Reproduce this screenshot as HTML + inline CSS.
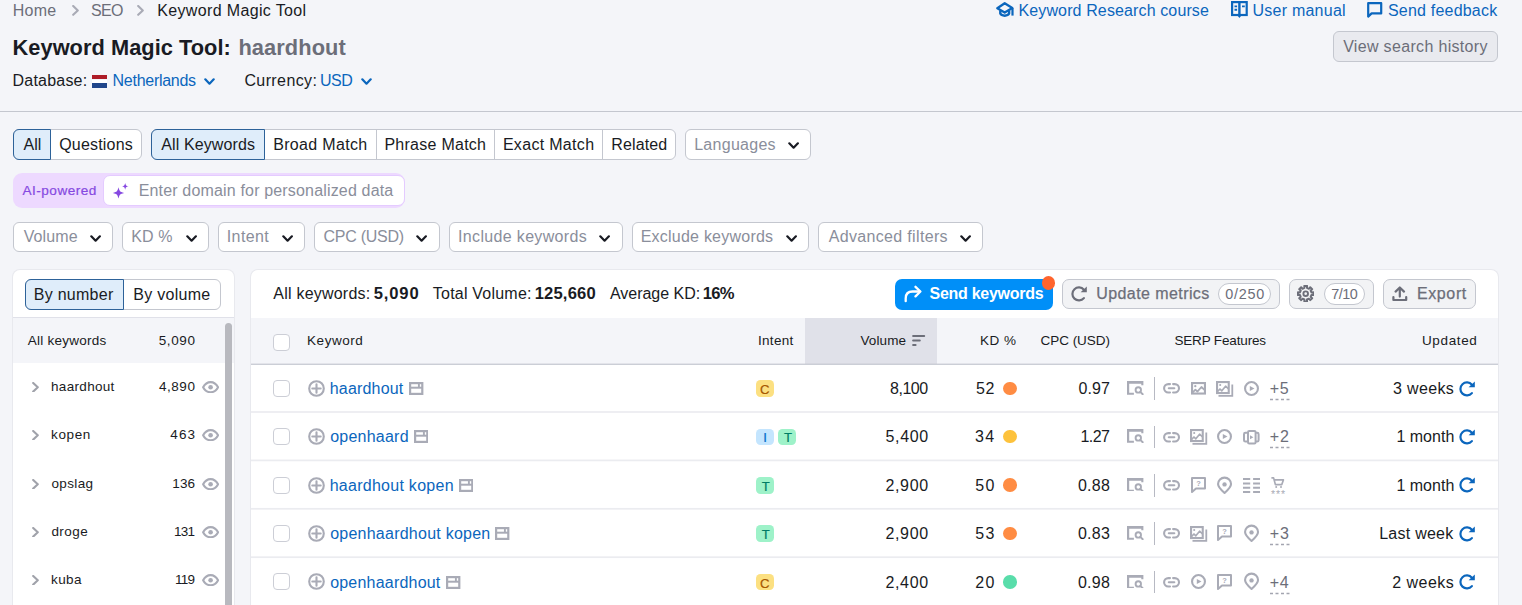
<!DOCTYPE html><html><head><meta charset="utf-8"><title>Keyword Magic Tool</title><style>
html,body{margin:0;padding:0}body{width:1522px;height:605px;overflow:hidden;background:#f4f5f9;position:relative;font-family:"Liberation Sans", Arial, sans-serif;}
.t{position:absolute;white-space:nowrap;line-height:1;}
</style></head><body>
<svg style="position:absolute;left:71.6px;top:5.3px" width="7" height="10.8" viewBox="0 0 7 10.8" ><path d="M1.2 1 L5.8 5.4 L1.2 9.8" fill="none" stroke="#a9abb6" stroke-width="2.1" stroke-linecap="round" stroke-linejoin="round"/></svg>
<svg style="position:absolute;left:137px;top:5.3px" width="7" height="10.8" viewBox="0 0 7 10.8" ><path d="M1.2 1 L5.8 5.4 L1.2 9.8" fill="none" stroke="#a9abb6" stroke-width="2.1" stroke-linecap="round" stroke-linejoin="round"/></svg>
<div style="position:absolute;left:92.2px;top:75.2px;width:15px;height:4.3px;background:#ae1c28"></div>
<div style="position:absolute;left:92.2px;top:79.5px;width:15px;height:3.8px;background:#fff"></div>
<div style="position:absolute;left:92.2px;top:83.3px;width:15px;height:4.5px;background:#21468b"></div>
<svg style="position:absolute;left:203.7px;top:77.8px" width="11" height="7" viewBox="0 0 11 7" ><path d="M1.3 1.3 L5.5 5.7 L9.7 1.3" fill="none" stroke="#0b66bd" stroke-width="2.2" stroke-linecap="round" stroke-linejoin="round"/></svg>
<svg style="position:absolute;left:360.7px;top:77.8px" width="11" height="7" viewBox="0 0 11 7" ><path d="M1.3 1.3 L5.5 5.7 L9.7 1.3" fill="none" stroke="#0b66bd" stroke-width="2.2" stroke-linecap="round" stroke-linejoin="round"/></svg>
<div style="position:absolute;left:0px;top:111px;width:1522px;height:1px;background:#c4c7cf"></div>
<svg style="position:absolute;left:996px;top:2px" width="18" height="15" viewBox="0 0 18 15" ><path d="M8.7 1.2 L1.3 6.2 L8.7 10.6 L16.3 6 Z" fill="none" stroke="#0b66bd" stroke-width="2.3" stroke-linejoin="round"/><path d="M4.3 8.6 V11.6 C5.6 14.4 11.8 14.4 13.1 11.6 V8.6" fill="none" stroke="#0b66bd" stroke-width="2.4" stroke-linejoin="round"/><path d="M16.5 6 V13.6" stroke="#0b66bd" stroke-width="2.2"/></svg>
<svg style="position:absolute;left:1231px;top:1px" width="17" height="18" viewBox="0 0 17 18" ><rect x="1.1" y="1.1" width="14.6" height="12.9" fill="none" stroke="#0b66bd" stroke-width="2.2"/><path d="M8.4 1 V14" stroke="#0b66bd" stroke-width="2.4"/><path d="M6.4 14.6 L8.4 16.9 L10.4 14.6 Z" fill="#0b66bd"/><path d="M3.5 5.4 H6.1 M3.5 8.8 H6.1 M11 5.4 H13.8" stroke="#0b66bd" stroke-width="1.9"/></svg>
<svg style="position:absolute;left:1367px;top:2px" width="16" height="16" viewBox="0 0 16 16" ><path d="M1.2 1.2 H14.2 V11.4 H4.6 L1.2 14.6 Z" fill="none" stroke="#0b66bd" stroke-width="2.2" stroke-linejoin="round"/></svg>
<div style="position:absolute;left:1333px;top:31px;width:163px;height:29px;border:1px solid #c4c7cf;background:#e9eaef;border-radius:6px"></div>
<div style="position:absolute;left:13px;top:129px;width:127px;height:29px;border:1px solid #c4c7cf;background:#fff;border-radius:6px"></div>
<div style="position:absolute;left:13px;top:129px;width:35.7px;height:29px;border:1px solid #2d6299;background:#dfedfa;border-radius:6px 0 0 6px"></div>
<div style="position:absolute;left:151px;top:129px;width:523px;height:29px;border:1px solid #c4c7cf;background:#fff;border-radius:6px"></div>
<div style="position:absolute;left:375.5px;top:130px;width:1px;height:29px;background:#c4c7cf"></div>
<div style="position:absolute;left:494.3px;top:130px;width:1px;height:29px;background:#c4c7cf"></div>
<div style="position:absolute;left:602.3px;top:130px;width:1px;height:29px;background:#c4c7cf"></div>
<div style="position:absolute;left:151px;top:129px;width:112px;height:29px;border:1px solid #2d6299;background:#dfedfa;border-radius:6px 0 0 6px"></div>
<div style="position:absolute;left:685px;top:129px;width:124px;height:29px;border:1px solid #c4c7cf;background:#fff;border-radius:6px"></div>
<svg style="position:absolute;left:787.5px;top:142.0px" width="11.2" height="7" viewBox="0 0 11.2 7" ><path d="M1.3 1.3 L5.6 5.7 L9.899999999999999 1.3" fill="none" stroke="#191b23" stroke-width="2.2" stroke-linecap="round" stroke-linejoin="round"/></svg>
<div style="position:absolute;left:13px;top:173.3px;width:391.5px;height:35px;background:#edd9ff;border-radius:9px"></div>
<div style="position:absolute;left:103.3px;top:175.4px;width:299.4px;height:28.2px;border:1px solid #e4cbff;background:#fff;border-radius:7px"></div>
<svg style="position:absolute;left:112px;top:182px" width="18" height="18" viewBox="0 0 18 18" ><path d="M6.5 5.300000000000001 C7.732 9.668000000000001 7.732 9.668000000000001 12.1 10.9 C7.732 12.132 7.732 12.132 6.5 16.5 C5.268 12.132 5.268 12.132 0.9000000000000004 10.9 C5.268 9.668000000000001 5.268 9.668000000000001 6.5 5.300000000000001 Z" fill="#8649e1"/><path d="M13.2 0.8999999999999999 C13.947999999999999 3.5519999999999996 13.947999999999999 3.5519999999999996 16.599999999999998 4.3 C13.947999999999999 5.048 13.947999999999999 5.048 13.2 7.699999999999999 C12.452 5.048 12.452 5.048 9.799999999999999 4.3 C12.452 3.5519999999999996 12.452 3.5519999999999996 13.2 0.8999999999999999 Z" fill="#8649e1"/></svg>
<div style="position:absolute;left:13px;top:222px;width:98px;height:28px;border:1px solid #c4c7cf;background:#fff;border-radius:6px"></div>
<svg style="position:absolute;left:89.5px;top:234.5px" width="11.2" height="7" viewBox="0 0 11.2 7" ><path d="M1.3 1.3 L5.6 5.7 L9.899999999999999 1.3" fill="none" stroke="#191b23" stroke-width="2.2" stroke-linecap="round" stroke-linejoin="round"/></svg>
<div style="position:absolute;left:122px;top:222px;width:84.69999999999999px;height:28px;border:1px solid #c4c7cf;background:#fff;border-radius:6px"></div>
<svg style="position:absolute;left:185.5px;top:234.5px" width="11.2" height="7" viewBox="0 0 11.2 7" ><path d="M1.3 1.3 L5.6 5.7 L9.899999999999999 1.3" fill="none" stroke="#191b23" stroke-width="2.2" stroke-linecap="round" stroke-linejoin="round"/></svg>
<div style="position:absolute;left:218px;top:222px;width:84.69999999999999px;height:28px;border:1px solid #c4c7cf;background:#fff;border-radius:6px"></div>
<svg style="position:absolute;left:281.7px;top:234.5px" width="11.2" height="7" viewBox="0 0 11.2 7" ><path d="M1.3 1.3 L5.6 5.7 L9.899999999999999 1.3" fill="none" stroke="#191b23" stroke-width="2.2" stroke-linecap="round" stroke-linejoin="round"/></svg>
<div style="position:absolute;left:314px;top:222px;width:123.5px;height:28px;border:1px solid #c4c7cf;background:#fff;border-radius:6px"></div>
<svg style="position:absolute;left:416.2px;top:234.5px" width="11.2" height="7" viewBox="0 0 11.2 7" ><path d="M1.3 1.3 L5.6 5.7 L9.899999999999999 1.3" fill="none" stroke="#191b23" stroke-width="2.2" stroke-linecap="round" stroke-linejoin="round"/></svg>
<div style="position:absolute;left:449.2px;top:222px;width:171.8px;height:28px;border:1px solid #c4c7cf;background:#fff;border-radius:6px"></div>
<svg style="position:absolute;left:598.7px;top:234.5px" width="11.2" height="7" viewBox="0 0 11.2 7" ><path d="M1.3 1.3 L5.6 5.7 L9.899999999999999 1.3" fill="none" stroke="#191b23" stroke-width="2.2" stroke-linecap="round" stroke-linejoin="round"/></svg>
<div style="position:absolute;left:632px;top:222px;width:174.70000000000005px;height:28px;border:1px solid #c4c7cf;background:#fff;border-radius:6px"></div>
<svg style="position:absolute;left:785.5px;top:234.5px" width="11.2" height="7" viewBox="0 0 11.2 7" ><path d="M1.3 1.3 L5.6 5.7 L9.899999999999999 1.3" fill="none" stroke="#191b23" stroke-width="2.2" stroke-linecap="round" stroke-linejoin="round"/></svg>
<div style="position:absolute;left:818.2px;top:222px;width:162.79999999999995px;height:28px;border:1px solid #c4c7cf;background:#fff;border-radius:6px"></div>
<svg style="position:absolute;left:959.5px;top:234.5px" width="11.2" height="7" viewBox="0 0 11.2 7" ><path d="M1.3 1.3 L5.6 5.7 L9.899999999999999 1.3" fill="none" stroke="#191b23" stroke-width="2.2" stroke-linecap="round" stroke-linejoin="round"/></svg>
<div style="position:absolute;left:13px;top:270px;width:220.5px;height:400px;background:#fff;border-radius:7px;box-shadow:0 0 0 1px #e8e9ee"></div>
<div style="position:absolute;left:25px;top:279px;width:194px;height:29px;border:1px solid #c4c7cf;background:#fff;border-radius:6px"></div>
<div style="position:absolute;left:25px;top:279px;width:96.7px;height:29px;border:1px solid #2d6299;background:#dfedfa;border-radius:6px 0 0 6px"></div>
<div style="position:absolute;left:12.5px;top:317px;width:221px;height:1px;background:#e0e1e9"></div>
<div style="position:absolute;left:12.5px;top:318px;width:221px;height:44.5px;background:#f4f5f9"></div>
<div style="position:absolute;left:224.8px;top:323.3px;width:7.4px;height:300px;background:#b8b9bf;border-radius:4px"></div>
<svg style="position:absolute;left:32.2px;top:381.6px" width="7" height="10.6" viewBox="0 0 7 10.6" ><path d="M1.2 1 L5.8 5.3 L1.2 9.6" fill="none" stroke="#a0a2aa" stroke-width="2.1" stroke-linecap="round" stroke-linejoin="round"/></svg>
<svg style="position:absolute;left:202px;top:381px" width="17.2" height="12.4" viewBox="0 0 17.2 12.4" ><path d="M1.1 6.2 C3.2 2.4 6 1.1 8.6 1.1 C11.2 1.1 14 2.4 16.1 6.2 C14 10 11.2 11.3 8.6 11.3 C6 11.3 3.2 10 1.1 6.2 Z" fill="none" stroke="#a9abb6" stroke-width="2.1" stroke-linejoin="round"/><circle cx="8.6" cy="6.2" r="2.3" fill="#a9abb6"/></svg>
<svg style="position:absolute;left:32.2px;top:429.6px" width="7" height="10.6" viewBox="0 0 7 10.6" ><path d="M1.2 1 L5.8 5.3 L1.2 9.6" fill="none" stroke="#a0a2aa" stroke-width="2.1" stroke-linecap="round" stroke-linejoin="round"/></svg>
<svg style="position:absolute;left:202px;top:429px" width="17.2" height="12.4" viewBox="0 0 17.2 12.4" ><path d="M1.1 6.2 C3.2 2.4 6 1.1 8.6 1.1 C11.2 1.1 14 2.4 16.1 6.2 C14 10 11.2 11.3 8.6 11.3 C6 11.3 3.2 10 1.1 6.2 Z" fill="none" stroke="#a9abb6" stroke-width="2.1" stroke-linejoin="round"/><circle cx="8.6" cy="6.2" r="2.3" fill="#a9abb6"/></svg>
<svg style="position:absolute;left:32.2px;top:478.6px" width="7" height="10.6" viewBox="0 0 7 10.6" ><path d="M1.2 1 L5.8 5.3 L1.2 9.6" fill="none" stroke="#a0a2aa" stroke-width="2.1" stroke-linecap="round" stroke-linejoin="round"/></svg>
<svg style="position:absolute;left:202px;top:478px" width="17.2" height="12.4" viewBox="0 0 17.2 12.4" ><path d="M1.1 6.2 C3.2 2.4 6 1.1 8.6 1.1 C11.2 1.1 14 2.4 16.1 6.2 C14 10 11.2 11.3 8.6 11.3 C6 11.3 3.2 10 1.1 6.2 Z" fill="none" stroke="#a9abb6" stroke-width="2.1" stroke-linejoin="round"/><circle cx="8.6" cy="6.2" r="2.3" fill="#a9abb6"/></svg>
<svg style="position:absolute;left:32.2px;top:526.6px" width="7" height="10.6" viewBox="0 0 7 10.6" ><path d="M1.2 1 L5.8 5.3 L1.2 9.6" fill="none" stroke="#a0a2aa" stroke-width="2.1" stroke-linecap="round" stroke-linejoin="round"/></svg>
<svg style="position:absolute;left:202px;top:526px" width="17.2" height="12.4" viewBox="0 0 17.2 12.4" ><path d="M1.1 6.2 C3.2 2.4 6 1.1 8.6 1.1 C11.2 1.1 14 2.4 16.1 6.2 C14 10 11.2 11.3 8.6 11.3 C6 11.3 3.2 10 1.1 6.2 Z" fill="none" stroke="#a9abb6" stroke-width="2.1" stroke-linejoin="round"/><circle cx="8.6" cy="6.2" r="2.3" fill="#a9abb6"/></svg>
<svg style="position:absolute;left:32.2px;top:574.6px" width="7" height="10.6" viewBox="0 0 7 10.6" ><path d="M1.2 1 L5.8 5.3 L1.2 9.6" fill="none" stroke="#a0a2aa" stroke-width="2.1" stroke-linecap="round" stroke-linejoin="round"/></svg>
<svg style="position:absolute;left:202px;top:574px" width="17.2" height="12.4" viewBox="0 0 17.2 12.4" ><path d="M1.1 6.2 C3.2 2.4 6 1.1 8.6 1.1 C11.2 1.1 14 2.4 16.1 6.2 C14 10 11.2 11.3 8.6 11.3 C6 11.3 3.2 10 1.1 6.2 Z" fill="none" stroke="#a9abb6" stroke-width="2.1" stroke-linejoin="round"/><circle cx="8.6" cy="6.2" r="2.3" fill="#a9abb6"/></svg>
<div style="position:absolute;left:251px;top:270px;width:1247px;height:400px;background:#fff;border-radius:7px;box-shadow:0 0 0 1px #e8e9ee"></div>
<div style="position:absolute;left:895px;top:279.2px;width:158px;height:30.6px;background:#008ff8;border-radius:7px"></div>
<svg style="position:absolute;left:903.5px;top:285px" width="18" height="18" viewBox="0 0 18 18" ><path d="M1.7 16.2 V13.4 Q1.7 6.5 8.6 6.5 H15.6" fill="none" stroke="#fff" stroke-width="2.3" stroke-linecap="round"/><path d="M11.5 1.8 L16.4 6.5 L11.5 11.4" fill="none" stroke="#fff" stroke-width="2.3" stroke-linecap="round" stroke-linejoin="round"/></svg>
<div style="position:absolute;left:1042.2px;top:276.3px;width:13px;height:13.4px;background:#ff642d;border-radius:50%"></div>
<div style="position:absolute;left:1062.3px;top:279.2px;width:215.4px;height:28.2px;border:1px solid #c4c7cf;background:#f2f3f5;border-radius:7px"></div>
<svg style="position:absolute;left:1071px;top:285.7px" width="16" height="16" viewBox="0 0 16 16" ><path d="M12.9 3.75 A6.5 6.5 0 1 0 12.9 12.1" fill="none" stroke="#6c6e79" stroke-width="2.2" stroke-linecap="round"/><path d="M15.8 0.4 V6.2 H9.6 Z" fill="#6c6e79"/></svg>
<div style="position:absolute;left:1218.2px;top:283.3px;width:51px;height:19.4px;border:1px solid #c4c7cf;background:#fff;border-radius:11px"></div>
<div style="position:absolute;left:1289.2px;top:279.2px;width:82.8px;height:28.2px;border:1px solid #c4c7cf;background:#f2f3f5;border-radius:7px"></div>
<svg style="position:absolute;left:1297px;top:285px" width="17.4" height="17.4" viewBox="0 0 17.4 17.4" ><path d="M16.48 7.34 L16.48 10.06 L14.46 9.99 L13.68 11.86 L15.16 13.24 L13.24 15.16 L11.86 13.68 L9.99 14.46 L10.06 16.48 L7.34 16.48 L7.41 14.46 L5.54 13.68 L4.16 15.16 L2.24 13.24 L3.72 11.86 L2.94 9.99 L0.92 10.06 L0.92 7.34 L2.94 7.41 L3.72 5.54 L2.24 4.16 L4.16 2.24 L5.54 3.72 L7.41 2.94 L7.34 0.92 L10.06 0.92 L9.99 2.94 L11.86 3.72 L13.24 2.24 L15.16 4.16 L13.68 5.54 L14.46 7.41 Z" fill="none" stroke="#6c6e79" stroke-width="2" stroke-linejoin="round"/><circle cx="8.7" cy="8.7" r="2.3" fill="none" stroke="#6c6e79" stroke-width="1.9"/></svg>
<div style="position:absolute;left:1324.2px;top:283.3px;width:38.5px;height:19.4px;border:1px solid #c4c7cf;background:#fff;border-radius:11px"></div>
<div style="position:absolute;left:1383px;top:279.2px;width:91.4px;height:28.2px;border:1px solid #c4c7cf;background:#f2f3f5;border-radius:7px"></div>
<svg style="position:absolute;left:1392px;top:286px" width="16" height="16" viewBox="0 0 16 16" ><path d="M7.8 10.6 V2 M3.6 5.6 L7.8 1.5 L12 5.6" fill="none" stroke="#6c6e79" stroke-width="2.2" stroke-linecap="round" stroke-linejoin="round"/><path d="M1.4 11 V14 H14.2 V11" fill="none" stroke="#6c6e79" stroke-width="2.2" stroke-linecap="round" stroke-linejoin="round"/></svg>
<div style="position:absolute;left:251px;top:318px;width:1247px;height:46px;background:#f4f5f9"></div>
<div style="position:absolute;left:805.3px;top:318px;width:131.9px;height:46px;background:#e0e1e9"></div>
<div style="position:absolute;left:251px;top:363px;width:1247px;height:1px;background:rgba(196,199,207,0.35)"></div>
<div style="position:absolute;left:251px;top:364px;width:1247px;height:1px;background:#cbced6"></div>
<svg style="position:absolute;left:912px;top:335px" width="14" height="11" viewBox="0 0 14 11" ><path d="M1.1 1.1 H12.2 M1.1 5.5 H7.8 M1.1 9.9 H3.6" stroke="#6c6e79" stroke-width="2" stroke-linecap="round"/></svg>
<div style="position:absolute;left:273px;top:334px;width:15px;height:15px;border:1px solid #ccced6;background:#fff;border-radius:4px"></div>
<div style="position:absolute;left:273px;top:379.7px;width:15px;height:15px;border:1px solid #ccced6;background:#fff;border-radius:4px"></div>
<svg style="position:absolute;left:308px;top:379.7px" width="17" height="17" viewBox="0 0 17 17" ><circle cx="8.5" cy="8.5" r="7.3" fill="none" stroke="#a9abb6" stroke-width="2.1"/><path d="M8.5 4.3 V12.7 M4.3 8.5 H12.7" stroke="#a9abb6" stroke-width="2.1" stroke-linecap="round"/></svg>
<svg style="position:absolute;left:409.4px;top:381.90000000000003px" width="14.4" height="13" viewBox="0 0 14.4 13" ><rect x="1.1" y="1.1" width="12.2" height="10.8" fill="none" stroke="#a9abb6" stroke-width="2.2"/><path d="M1 5.7 H13.4" stroke="#a9abb6" stroke-width="2"/><path d="M9.9 1 V5.6" stroke="#a9abb6" stroke-width="1.9"/></svg>
<div style="position:absolute;left:756.2px;top:380.2px;width:17.5px;height:16.5px;background:#fce081;border-radius:4.5px"></div>
<div style="position:absolute;left:1003.2px;top:381.5px;width:13.6px;height:13.6px;background:#ff8c43;border-radius:50%"></div>
<svg style="position:absolute;left:1127.2px;top:380.90000000000003px" width="16.4" height="13.8" viewBox="0 0 16.4 13.8" ><path d="M0 0 H16.4 V4.3 H14.3 V2.7 H2.2 V11.7 H6.9 V13.8 H0 Z" fill="#a9abb6"/><circle cx="11.3" cy="8.9" r="2.7" fill="none" stroke="#a9abb6" stroke-width="1.9"/><path d="M13.3 10.9 L15.7 13.3" stroke="#a9abb6" stroke-width="1.9" stroke-linecap="round"/></svg>
<div style="position:absolute;left:1154px;top:377.1px;width:1px;height:22.8px;background:#b7b9c3"></div>
<svg style="position:absolute;left:1163.1000000000001px;top:383.2px" width="17.1" height="10.6" viewBox="0 0 17.1 10.6" overflow="visible"><path d="M7 1.1 H5.3 A4.2 4.2 0 0 0 5.3 9.5 H7 M10.1 1.1 H11.8 A4.2 4.2 0 0 1 11.8 9.5 H10.1 M5.8 5.3 H11.3" fill="none" stroke="#a9abb6" stroke-width="2.1" stroke-linecap="round"/></svg>
<svg style="position:absolute;left:1191.25px;top:382.0px" width="15" height="12.6" viewBox="0 0 15 12.6" overflow="visible"><rect x="1.05" y="1.05" width="12.9" height="10.5" fill="none" stroke="#a9abb6" stroke-width="2.1"/><path d="M1.4 10.6 L4.4 7.6 L6.4 9.6 L10.4 5 L13.8 8.2" fill="none" stroke="#a9abb6" stroke-width="1.8" stroke-linejoin="round"/><circle cx="4.3" cy="4.2" r="1.15" fill="#a9abb6"/></svg>
<svg style="position:absolute;left:1216.1000000000001px;top:380.8px" width="17.2" height="15.8" viewBox="0 0 17.2 15.8" overflow="visible"><rect x="1.05" y="1.05" width="11.7" height="11" fill="none" stroke="#a9abb6" stroke-width="2.1"/><path d="M1.4 10.6 L4 8 L5.8 9.8 L9.6 5.2 L12.6 8" fill="none" stroke="#a9abb6" stroke-width="1.7" stroke-linejoin="round"/><circle cx="4.2" cy="4" r="1.05" fill="#a9abb6"/><path d="M16.3 3.4 V14.9 H2.5" fill="none" stroke="#a9abb6" stroke-width="1.8"/></svg>
<svg style="position:absolute;left:1244.1px;top:380.8px" width="15" height="15" viewBox="0 0 15 15" overflow="visible"><circle cx="7.5" cy="7.5" r="6.45" fill="none" stroke="#a9abb6" stroke-width="2.1"/><path d="M5.8 4.9 L10.5 7.5 L5.8 10.1 Z" fill="#a9abb6"/></svg>
<svg style="position:absolute;left:1269.6px;top:398.3px" width="21" height="3"><path d="M0 1.5 H21" stroke="#a3a5b0" stroke-width="1.5" stroke-dasharray="3 2.5"/></svg>
<svg style="position:absolute;left:1459px;top:380.5px" width="16" height="16" viewBox="0 0 16 16" ><path d="M12.9 3.75 A6.5 6.5 0 1 0 12.9 12.1" fill="none" stroke="#0b66bd" stroke-width="2.2" stroke-linecap="round"/><path d="M15.8 0.4 V6.2 H9.6 Z" fill="#0b66bd"/></svg>
<svg style="position:absolute;left:251px;top:410px" width="1247" height="5"><rect x="0" y="1.15" width="1247" height="1.7" fill="#ebecf0"/></svg>
<div style="position:absolute;left:273px;top:428.09999999999997px;width:15px;height:15px;border:1px solid #ccced6;background:#fff;border-radius:4px"></div>
<svg style="position:absolute;left:308px;top:428.09999999999997px" width="17" height="17" viewBox="0 0 17 17" ><circle cx="8.5" cy="8.5" r="7.3" fill="none" stroke="#a9abb6" stroke-width="2.1"/><path d="M8.5 4.3 V12.7 M4.3 8.5 H12.7" stroke="#a9abb6" stroke-width="2.1" stroke-linecap="round"/></svg>
<svg style="position:absolute;left:413.7px;top:430.3px" width="14.4" height="13" viewBox="0 0 14.4 13" ><rect x="1.1" y="1.1" width="12.2" height="10.8" fill="none" stroke="#a9abb6" stroke-width="2.2"/><path d="M1 5.7 H13.4" stroke="#a9abb6" stroke-width="2"/><path d="M9.9 1 V5.6" stroke="#a9abb6" stroke-width="1.9"/></svg>
<div style="position:absolute;left:756.2px;top:428.59999999999997px;width:17.5px;height:16.5px;background:#c4e5fe;border-radius:4.5px"></div>
<div style="position:absolute;left:778.3000000000001px;top:428.59999999999997px;width:17.5px;height:16.5px;background:#9ef2c9;border-radius:4.5px"></div>
<div style="position:absolute;left:1003.2px;top:429.9px;width:13.6px;height:13.6px;background:#fdc23c;border-radius:50%"></div>
<svg style="position:absolute;left:1127.2px;top:429.3px" width="16.4" height="13.8" viewBox="0 0 16.4 13.8" ><path d="M0 0 H16.4 V4.3 H14.3 V2.7 H2.2 V11.7 H6.9 V13.8 H0 Z" fill="#a9abb6"/><circle cx="11.3" cy="8.9" r="2.7" fill="none" stroke="#a9abb6" stroke-width="1.9"/><path d="M13.3 10.9 L15.7 13.3" stroke="#a9abb6" stroke-width="1.9" stroke-linecap="round"/></svg>
<div style="position:absolute;left:1154px;top:425.5px;width:1px;height:22.8px;background:#b7b9c3"></div>
<svg style="position:absolute;left:1163.1000000000001px;top:431.59999999999997px" width="17.1" height="10.6" viewBox="0 0 17.1 10.6" overflow="visible"><path d="M7 1.1 H5.3 A4.2 4.2 0 0 0 5.3 9.5 H7 M10.1 1.1 H11.8 A4.2 4.2 0 0 1 11.8 9.5 H10.1 M5.8 5.3 H11.3" fill="none" stroke="#a9abb6" stroke-width="2.1" stroke-linecap="round"/></svg>
<svg style="position:absolute;left:1190.15px;top:429.2px" width="17.2" height="15.8" viewBox="0 0 17.2 15.8" overflow="visible"><rect x="1.05" y="1.05" width="11.7" height="11" fill="none" stroke="#a9abb6" stroke-width="2.1"/><path d="M1.4 10.6 L4 8 L5.8 9.8 L9.6 5.2 L12.6 8" fill="none" stroke="#a9abb6" stroke-width="1.7" stroke-linejoin="round"/><circle cx="4.2" cy="4" r="1.05" fill="#a9abb6"/><path d="M16.3 3.4 V14.9 H2.5" fill="none" stroke="#a9abb6" stroke-width="1.8"/></svg>
<svg style="position:absolute;left:1217.2px;top:429.2px" width="15" height="15" viewBox="0 0 15 15" overflow="visible"><circle cx="7.5" cy="7.5" r="6.45" fill="none" stroke="#a9abb6" stroke-width="2.1"/><path d="M5.8 4.9 L10.5 7.5 L5.8 10.1 Z" fill="#a9abb6"/></svg>
<svg style="position:absolute;left:1243.3px;top:429.5px" width="16.6" height="14.4" viewBox="0 0 16.6 14.4" overflow="visible"><rect x="5" y="1" width="7.6" height="12.4" rx="1.2" fill="none" stroke="#a9abb6" stroke-width="2"/><path d="M4 2.8 H2.4 Q1 2.8 1 4.2 V10.2 Q1 11.6 2.4 11.6 H4 M12.6 2.8 H14.2 Q15.6 2.8 15.6 4.2 V10.2 Q15.6 11.6 14.2 11.6 H12.6" fill="none" stroke="#a9abb6" stroke-width="2"/><path d="M7 5.2 L10.4 7.2 L7 9.2 Z" fill="#a9abb6"/></svg>
<svg style="position:absolute;left:1269.6px;top:446.3px" width="21" height="3"><path d="M0 1.5 H21" stroke="#a3a5b0" stroke-width="1.5" stroke-dasharray="3 2.5"/></svg>
<svg style="position:absolute;left:1459px;top:428.9px" width="16" height="16" viewBox="0 0 16 16" ><path d="M12.9 3.75 A6.5 6.5 0 1 0 12.9 12.1" fill="none" stroke="#0b66bd" stroke-width="2.2" stroke-linecap="round"/><path d="M15.8 0.4 V6.2 H9.6 Z" fill="#0b66bd"/></svg>
<svg style="position:absolute;left:251px;top:458px" width="1247" height="5"><rect x="0" y="1.55" width="1247" height="1.7" fill="#ebecf0"/></svg>
<div style="position:absolute;left:273px;top:476.5px;width:15px;height:15px;border:1px solid #ccced6;background:#fff;border-radius:4px"></div>
<svg style="position:absolute;left:308px;top:476.5px" width="17" height="17" viewBox="0 0 17 17" ><circle cx="8.5" cy="8.5" r="7.3" fill="none" stroke="#a9abb6" stroke-width="2.1"/><path d="M8.5 4.3 V12.7 M4.3 8.5 H12.7" stroke="#a9abb6" stroke-width="2.1" stroke-linecap="round"/></svg>
<svg style="position:absolute;left:458.7px;top:478.70000000000005px" width="14.4" height="13" viewBox="0 0 14.4 13" ><rect x="1.1" y="1.1" width="12.2" height="10.8" fill="none" stroke="#a9abb6" stroke-width="2.2"/><path d="M1 5.7 H13.4" stroke="#a9abb6" stroke-width="2"/><path d="M9.9 1 V5.6" stroke="#a9abb6" stroke-width="1.9"/></svg>
<div style="position:absolute;left:756.2px;top:477.0px;width:17.5px;height:16.5px;background:#9ef2c9;border-radius:4.5px"></div>
<div style="position:absolute;left:1003.2px;top:478.3px;width:13.6px;height:13.6px;background:#ff8c43;border-radius:50%"></div>
<svg style="position:absolute;left:1127.2px;top:477.70000000000005px" width="16.4" height="13.8" viewBox="0 0 16.4 13.8" ><path d="M0 0 H16.4 V4.3 H14.3 V2.7 H2.2 V11.7 H6.9 V13.8 H0 Z" fill="#a9abb6"/><circle cx="11.3" cy="8.9" r="2.7" fill="none" stroke="#a9abb6" stroke-width="1.9"/><path d="M13.3 10.9 L15.7 13.3" stroke="#a9abb6" stroke-width="1.9" stroke-linecap="round"/></svg>
<div style="position:absolute;left:1154px;top:473.90000000000003px;width:1px;height:22.8px;background:#b7b9c3"></div>
<svg style="position:absolute;left:1163.1000000000001px;top:480.0px" width="17.1" height="10.6" viewBox="0 0 17.1 10.6" overflow="visible"><path d="M7 1.1 H5.3 A4.2 4.2 0 0 0 5.3 9.5 H7 M10.1 1.1 H11.8 A4.2 4.2 0 0 1 11.8 9.5 H10.1 M5.8 5.3 H11.3" fill="none" stroke="#a9abb6" stroke-width="2.1" stroke-linecap="round"/></svg>
<svg style="position:absolute;left:1191.25px;top:476.8px" width="15" height="16.2" viewBox="0 0 15 16.2" overflow="visible"><path d="M1 1 H14 V11.6 H5 L1 15 Z" fill="none" stroke="#a9abb6" stroke-width="2" stroke-linejoin="round"/><text x="7.6" y="9.4" font-size="7.5" font-weight="700" text-anchor="middle" fill="#a9abb6" font-family="Liberation Sans, sans-serif">?</text></svg>
<svg style="position:absolute;left:1217.15px;top:476.5px" width="15.1" height="17.2" viewBox="0 0 15.1 17.2" overflow="visible"><path d="M7.55 16 C3.4 12.4 1.05 9.8 1.05 7.1 A6.5 6.5 0 0 1 14.05 7.1 C14.05 9.8 11.7 12.4 7.55 16 Z" fill="none" stroke="#a9abb6" stroke-width="2.1" stroke-linejoin="round"/><circle cx="7.55" cy="7.4" r="2.2" fill="#a9abb6"/></svg>
<svg style="position:absolute;left:1243.1px;top:477.55px" width="17" height="15.1" viewBox="0 0 17 15.1" overflow="visible"><path d="M0 1 H7.2 M10.1 1 H17 M0 5.4 H7.2 M10.1 5.4 H17 M0 9.8 H7.2 M10.1 9.8 H17 M0 14.1 H7.2 M10.1 14.1 H17" stroke="#a9abb6" stroke-width="2"/></svg>
<svg style="position:absolute;left:1270.8px;top:476.70000000000005px" width="14.8" height="17" viewBox="0 0 14.8 17" overflow="visible"><path d="M0.4 0.9 H2.6 L4.4 7.6 H10.8 L12.4 2.9 H3.3" fill="none" stroke="#a9abb6" stroke-width="1.7" stroke-linejoin="round"/><circle cx="5.2" cy="9.9" r="1" fill="#a9abb6"/><circle cx="10" cy="9.9" r="1" fill="#a9abb6"/><text x="7.4" y="20.6" font-size="10.5" text-anchor="middle" fill="#a9abb6" font-family="Liberation Sans, sans-serif" letter-spacing="0.9">***</text></svg>
<svg style="position:absolute;left:1459px;top:477.3px" width="16" height="16" viewBox="0 0 16 16" ><path d="M12.9 3.75 A6.5 6.5 0 1 0 12.9 12.1" fill="none" stroke="#0b66bd" stroke-width="2.2" stroke-linecap="round"/><path d="M15.8 0.4 V6.2 H9.6 Z" fill="#0b66bd"/></svg>
<svg style="position:absolute;left:251px;top:506px" width="1247" height="5"><rect x="0" y="1.95" width="1247" height="1.7" fill="#ebecf0"/></svg>
<div style="position:absolute;left:273px;top:524.9px;width:15px;height:15px;border:1px solid #ccced6;background:#fff;border-radius:4px"></div>
<svg style="position:absolute;left:308px;top:524.9px" width="17" height="17" viewBox="0 0 17 17" ><circle cx="8.5" cy="8.5" r="7.3" fill="none" stroke="#a9abb6" stroke-width="2.1"/><path d="M8.5 4.3 V12.7 M4.3 8.5 H12.7" stroke="#a9abb6" stroke-width="2.1" stroke-linecap="round"/></svg>
<svg style="position:absolute;left:495.4px;top:527.1px" width="14.4" height="13" viewBox="0 0 14.4 13" ><rect x="1.1" y="1.1" width="12.2" height="10.8" fill="none" stroke="#a9abb6" stroke-width="2.2"/><path d="M1 5.7 H13.4" stroke="#a9abb6" stroke-width="2"/><path d="M9.9 1 V5.6" stroke="#a9abb6" stroke-width="1.9"/></svg>
<div style="position:absolute;left:756.2px;top:525.4px;width:17.5px;height:16.5px;background:#9ef2c9;border-radius:4.5px"></div>
<div style="position:absolute;left:1003.2px;top:526.7px;width:13.6px;height:13.6px;background:#ff8c43;border-radius:50%"></div>
<svg style="position:absolute;left:1127.2px;top:526.1px" width="16.4" height="13.8" viewBox="0 0 16.4 13.8" ><path d="M0 0 H16.4 V4.3 H14.3 V2.7 H2.2 V11.7 H6.9 V13.8 H0 Z" fill="#a9abb6"/><circle cx="11.3" cy="8.9" r="2.7" fill="none" stroke="#a9abb6" stroke-width="1.9"/><path d="M13.3 10.9 L15.7 13.3" stroke="#a9abb6" stroke-width="1.9" stroke-linecap="round"/></svg>
<div style="position:absolute;left:1154px;top:522.3px;width:1px;height:22.8px;background:#b7b9c3"></div>
<svg style="position:absolute;left:1163.1000000000001px;top:528.4000000000001px" width="17.1" height="10.6" viewBox="0 0 17.1 10.6" overflow="visible"><path d="M7 1.1 H5.3 A4.2 4.2 0 0 0 5.3 9.5 H7 M10.1 1.1 H11.8 A4.2 4.2 0 0 1 11.8 9.5 H10.1 M5.8 5.3 H11.3" fill="none" stroke="#a9abb6" stroke-width="2.1" stroke-linecap="round"/></svg>
<svg style="position:absolute;left:1190.15px;top:526.0px" width="17.2" height="15.8" viewBox="0 0 17.2 15.8" overflow="visible"><rect x="1.05" y="1.05" width="11.7" height="11" fill="none" stroke="#a9abb6" stroke-width="2.1"/><path d="M1.4 10.6 L4 8 L5.8 9.8 L9.6 5.2 L12.6 8" fill="none" stroke="#a9abb6" stroke-width="1.7" stroke-linejoin="round"/><circle cx="4.2" cy="4" r="1.05" fill="#a9abb6"/><path d="M16.3 3.4 V14.9 H2.5" fill="none" stroke="#a9abb6" stroke-width="1.8"/></svg>
<svg style="position:absolute;left:1217.2px;top:525.1999999999999px" width="15" height="16.2" viewBox="0 0 15 16.2" overflow="visible"><path d="M1 1 H14 V11.6 H5 L1 15 Z" fill="none" stroke="#a9abb6" stroke-width="2" stroke-linejoin="round"/><text x="7.6" y="9.4" font-size="7.5" font-weight="700" text-anchor="middle" fill="#a9abb6" font-family="Liberation Sans, sans-serif">?</text></svg>
<svg style="position:absolute;left:1244.05px;top:524.9px" width="15.1" height="17.2" viewBox="0 0 15.1 17.2" overflow="visible"><path d="M7.55 16 C3.4 12.4 1.05 9.8 1.05 7.1 A6.5 6.5 0 0 1 14.05 7.1 C14.05 9.8 11.7 12.4 7.55 16 Z" fill="none" stroke="#a9abb6" stroke-width="2.1" stroke-linejoin="round"/><circle cx="7.55" cy="7.4" r="2.2" fill="#a9abb6"/></svg>
<svg style="position:absolute;left:1269.6px;top:543.3px" width="21" height="3"><path d="M0 1.5 H21" stroke="#a3a5b0" stroke-width="1.5" stroke-dasharray="3 2.5"/></svg>
<svg style="position:absolute;left:1459px;top:525.7px" width="16" height="16" viewBox="0 0 16 16" ><path d="M12.9 3.75 A6.5 6.5 0 1 0 12.9 12.1" fill="none" stroke="#0b66bd" stroke-width="2.2" stroke-linecap="round"/><path d="M15.8 0.4 V6.2 H9.6 Z" fill="#0b66bd"/></svg>
<svg style="position:absolute;left:251px;top:555px" width="1247" height="5"><rect x="0" y="1.35" width="1247" height="1.7" fill="#ebecf0"/></svg>
<div style="position:absolute;left:273px;top:573.3px;width:15px;height:15px;border:1px solid #ccced6;background:#fff;border-radius:4px"></div>
<svg style="position:absolute;left:308px;top:573.3px" width="17" height="17" viewBox="0 0 17 17" ><circle cx="8.5" cy="8.5" r="7.3" fill="none" stroke="#a9abb6" stroke-width="2.1"/><path d="M8.5 4.3 V12.7 M4.3 8.5 H12.7" stroke="#a9abb6" stroke-width="2.1" stroke-linecap="round"/></svg>
<svg style="position:absolute;left:446.4px;top:575.5px" width="14.4" height="13" viewBox="0 0 14.4 13" ><rect x="1.1" y="1.1" width="12.2" height="10.8" fill="none" stroke="#a9abb6" stroke-width="2.2"/><path d="M1 5.7 H13.4" stroke="#a9abb6" stroke-width="2"/><path d="M9.9 1 V5.6" stroke="#a9abb6" stroke-width="1.9"/></svg>
<div style="position:absolute;left:756.2px;top:573.8px;width:17.5px;height:16.5px;background:#fce081;border-radius:4.5px"></div>
<div style="position:absolute;left:1003.2px;top:575.1px;width:13.6px;height:13.6px;background:#59ddaa;border-radius:50%"></div>
<svg style="position:absolute;left:1127.2px;top:574.5px" width="16.4" height="13.8" viewBox="0 0 16.4 13.8" ><path d="M0 0 H16.4 V4.3 H14.3 V2.7 H2.2 V11.7 H6.9 V13.8 H0 Z" fill="#a9abb6"/><circle cx="11.3" cy="8.9" r="2.7" fill="none" stroke="#a9abb6" stroke-width="1.9"/><path d="M13.3 10.9 L15.7 13.3" stroke="#a9abb6" stroke-width="1.9" stroke-linecap="round"/></svg>
<div style="position:absolute;left:1154px;top:570.6999999999999px;width:1px;height:22.8px;background:#b7b9c3"></div>
<svg style="position:absolute;left:1163.1000000000001px;top:576.8000000000001px" width="17.1" height="10.6" viewBox="0 0 17.1 10.6" overflow="visible"><path d="M7 1.1 H5.3 A4.2 4.2 0 0 0 5.3 9.5 H7 M10.1 1.1 H11.8 A4.2 4.2 0 0 1 11.8 9.5 H10.1 M5.8 5.3 H11.3" fill="none" stroke="#a9abb6" stroke-width="2.1" stroke-linecap="round"/></svg>
<svg style="position:absolute;left:1191.25px;top:574.4px" width="15" height="15" viewBox="0 0 15 15" overflow="visible"><circle cx="7.5" cy="7.5" r="6.45" fill="none" stroke="#a9abb6" stroke-width="2.1"/><path d="M5.8 4.9 L10.5 7.5 L5.8 10.1 Z" fill="#a9abb6"/></svg>
<svg style="position:absolute;left:1217.2px;top:573.5999999999999px" width="15" height="16.2" viewBox="0 0 15 16.2" overflow="visible"><path d="M1 1 H14 V11.6 H5 L1 15 Z" fill="none" stroke="#a9abb6" stroke-width="2" stroke-linejoin="round"/><text x="7.6" y="9.4" font-size="7.5" font-weight="700" text-anchor="middle" fill="#a9abb6" font-family="Liberation Sans, sans-serif">?</text></svg>
<svg style="position:absolute;left:1244.05px;top:573.3px" width="15.1" height="17.2" viewBox="0 0 15.1 17.2" overflow="visible"><path d="M7.55 16 C3.4 12.4 1.05 9.8 1.05 7.1 A6.5 6.5 0 0 1 14.05 7.1 C14.05 9.8 11.7 12.4 7.55 16 Z" fill="none" stroke="#a9abb6" stroke-width="2.1" stroke-linejoin="round"/><circle cx="7.55" cy="7.4" r="2.2" fill="#a9abb6"/></svg>
<svg style="position:absolute;left:1269.6px;top:592.3px" width="21" height="3"><path d="M0 1.5 H21" stroke="#a3a5b0" stroke-width="1.5" stroke-dasharray="3 2.5"/></svg>
<svg style="position:absolute;left:1459px;top:574.1px" width="16" height="16" viewBox="0 0 16 16" ><path d="M12.9 3.75 A6.5 6.5 0 1 0 12.9 12.1" fill="none" stroke="#0b66bd" stroke-width="2.2" stroke-linecap="round"/><path d="M15.8 0.4 V6.2 H9.6 Z" fill="#0b66bd"/></svg>
<span class="t" id="t0" style="left:12.69px;top:3.00px;font-size:16px;font-weight:400;color:#6c6e79;letter-spacing:0.279px;">Home</span>
<span class="t" id="t1" style="left:91.07px;top:3.00px;font-size:16px;font-weight:400;color:#6c6e79;letter-spacing:-0.750px;">SEO</span>
<span class="t" id="t2" style="left:157.19px;top:3.00px;font-size:16px;font-weight:400;color:#191b23;letter-spacing:0.352px;">Keyword Magic Tool</span>
<span class="t" id="t3" style="left:12.54px;top:37.00px;font-size:21.8px;font-weight:700;color:#191b23;letter-spacing:0.038px;">Keyword Magic Tool:</span>
<span class="t" id="t4" style="left:238.48px;top:37.00px;font-size:21.8px;font-weight:700;color:#6c6e79;letter-spacing:0.091px;">haardhout</span>
<span class="t" id="t5" style="left:12.59px;top:73.00px;font-size:16px;font-weight:400;color:#191b23;letter-spacing:0.204px;">Database:</span>
<span class="t" id="t6" style="left:112.59px;top:73.00px;font-size:16px;font-weight:400;color:#0b66bd;letter-spacing:-0.279px;">Netherlands</span>
<span class="t" id="t7" style="left:244.39px;top:73.00px;font-size:16px;font-weight:400;color:#191b23;letter-spacing:0.402px;">Currency:</span>
<span class="t" id="t8" style="left:319.97px;top:73.00px;font-size:16px;font-weight:400;color:#0b66bd;letter-spacing:-0.491px;">USD</span>
<span class="t" id="t9" style="left:1018.49px;top:3.00px;font-size:16px;font-weight:400;color:#0b66bd;letter-spacing:0.126px;">Keyword Research course</span>
<span class="t" id="t10" style="left:1252.47px;top:3.00px;font-size:16px;font-weight:400;color:#0b66bd;letter-spacing:0.240px;">User manual</span>
<span class="t" id="t11" style="left:1387.97px;top:3.00px;font-size:16px;font-weight:400;color:#0b66bd;letter-spacing:0.204px;">Send feedback</span>
<span class="t" id="t12" style="left:1343.13px;top:39.00px;font-size:16px;font-weight:400;color:#6c6e79;letter-spacing:0.331px;">View search history</span>
<span class="t" id="t13" style="left:23.57px;top:137.00px;font-size:16px;font-weight:400;color:#191b23;letter-spacing:-0.040px;">All</span>
<span class="t" id="t14" style="left:59.24px;top:137.00px;font-size:16px;font-weight:400;color:#191b23;letter-spacing:0.186px;">Questions</span>
<span class="t" id="t15" style="left:161.17px;top:137.00px;font-size:16px;font-weight:400;color:#191b23;letter-spacing:0.130px;">All Keywords</span>
<span class="t" id="t16" style="left:273.19px;top:137.00px;font-size:16px;font-weight:400;color:#191b23;letter-spacing:0.333px;">Broad Match</span>
<span class="t" id="t17" style="left:384.39px;top:137.00px;font-size:16px;font-weight:400;color:#191b23;letter-spacing:0.267px;">Phrase Match</span>
<span class="t" id="t18" style="left:502.89px;top:137.00px;font-size:16px;font-weight:400;color:#191b23;letter-spacing:0.312px;">Exact Match</span>
<span class="t" id="t19" style="left:611.19px;top:137.00px;font-size:16px;font-weight:400;color:#191b23;letter-spacing:0.148px;">Related</span>
<span class="t" id="t20" style="left:694.19px;top:137.00px;font-size:16px;font-weight:400;color:#8a8e9b;letter-spacing:0.275px;">Languages</span>
<span class="t" id="t21" style="left:22.47px;top:184.00px;font-size:13.6px;font-weight:400;color:#8649e1;letter-spacing:0.488px;-webkit-text-stroke:0.2px #8649e1;">AI-powered</span>
<span class="t" id="t22" style="left:138.69px;top:183.00px;font-size:16px;font-weight:400;color:#8a8e9b;letter-spacing:0.166px;">Enter domain for personalized data</span>
<span class="t" id="t23" style="left:23.63px;top:229.00px;font-size:16px;font-weight:400;color:#8a8e9b;letter-spacing:0.141px;">Volume</span>
<span class="t" id="t24" style="left:131.19px;top:229.00px;font-size:16px;font-weight:400;color:#8a8e9b;letter-spacing:0.159px;">KD %</span>
<span class="t" id="t25" style="left:226.72px;top:229.00px;font-size:16px;font-weight:400;color:#8a8e9b;letter-spacing:0.412px;">Intent</span>
<span class="t" id="t26" style="left:323.39px;top:229.00px;font-size:16px;font-weight:400;color:#8a8e9b;letter-spacing:-0.233px;">CPC (USD)</span>
<span class="t" id="t27" style="left:458.02px;top:229.00px;font-size:16px;font-weight:400;color:#8a8e9b;letter-spacing:0.342px;">Include keywords</span>
<span class="t" id="t28" style="left:640.69px;top:229.00px;font-size:16px;font-weight:400;color:#8a8e9b;letter-spacing:0.229px;">Exclude keywords</span>
<span class="t" id="t29" style="left:828.67px;top:229.00px;font-size:16px;font-weight:400;color:#8a8e9b;letter-spacing:0.338px;">Advanced filters</span>
<span class="t" id="t30" style="left:33.69px;top:287.00px;font-size:16px;font-weight:400;color:#191b23;letter-spacing:0.275px;">By number</span>
<span class="t" id="t31" style="left:133.19px;top:287.00px;font-size:16px;font-weight:400;color:#191b23;letter-spacing:0.290px;">By volume</span>
<span class="t" id="t32" style="left:27.77px;top:334.00px;font-size:13.5px;font-weight:400;color:#191b23;letter-spacing:0.248px;">All keywords</span>
<span class="t" id="t33" style="left:158.66px;top:334.00px;font-size:13.5px;font-weight:400;color:#191b23;letter-spacing:0.618px;">5,090</span>
<span class="t" id="t34" style="left:51.06px;top:380.00px;font-size:13.5px;font-weight:400;color:#191b23;letter-spacing:0.315px;">haardhout</span>
<span class="t" id="t35" style="left:158.89px;top:380.00px;font-size:13.5px;font-weight:400;color:#191b23;letter-spacing:0.560px;">4,890</span>
<span class="t" id="t36" style="left:51.09px;top:428.00px;font-size:13.5px;font-weight:400;color:#191b23;letter-spacing:0.597px;">kopen</span>
<span class="t" id="t37" style="left:170.29px;top:428.00px;font-size:13.5px;font-weight:400;color:#191b23;letter-spacing:1.086px;">463</span>
<span class="t" id="t38" style="left:51.43px;top:477.00px;font-size:13.5px;font-weight:400;color:#191b23;letter-spacing:0.368px;">opslag</span>
<span class="t" id="t39" style="left:172.37px;top:477.00px;font-size:13.5px;font-weight:400;color:#191b23;letter-spacing:0.045px;">136</span>
<span class="t" id="t40" style="left:51.43px;top:525.00px;font-size:13.5px;font-weight:400;color:#191b23;letter-spacing:0.434px;">droge</span>
<span class="t" id="t41" style="left:174.03px;top:525.00px;font-size:13.5px;font-weight:400;color:#191b23;letter-spacing:-0.750px;">131</span>
<span class="t" id="t42" style="left:51.09px;top:573.00px;font-size:13.5px;font-weight:400;color:#191b23;letter-spacing:0.376px;">kuba</span>
<span class="t" id="t43" style="left:175.01px;top:573.00px;font-size:13.5px;font-weight:400;color:#191b23;letter-spacing:-0.750px;">119</span>
<span class="t" id="t44" style="left:273.37px;top:286.00px;font-size:16px;font-weight:400;color:#191b23;letter-spacing:0.212px;">All keywords:</span>
<span class="t" id="t45" style="left:373.69px;top:286.00px;font-size:16.6px;font-weight:700;color:#191b23;letter-spacing:0.865px;">5,090</span>
<span class="t" id="t46" style="left:432.84px;top:286.00px;font-size:16px;font-weight:400;color:#191b23;letter-spacing:0.213px;">Total Volume:</span>
<span class="t" id="t47" style="left:534.65px;top:286.00px;font-size:16.6px;font-weight:700;color:#191b23;letter-spacing:0.174px;">125,660</span>
<span class="t" id="t48" style="left:609.97px;top:286.00px;font-size:16px;font-weight:400;color:#191b23;letter-spacing:-0.023px;">Average KD:</span>
<span class="t" id="t49" style="left:702.65px;top:286.00px;font-size:16.6px;font-weight:700;color:#191b23;letter-spacing:-0.618px;">16%</span>
<span class="t" id="t50" style="left:929.54px;top:286.00px;font-size:16px;font-weight:700;color:#fff;letter-spacing:-0.271px;">Send keywords</span>
<span class="t" id="t51" style="left:1096.27px;top:286.00px;font-size:16px;font-weight:400;color:#6c6e79;letter-spacing:0.417px;-webkit-text-stroke:0.25px #6c6e79;">Update metrics</span>
<span class="t" id="t52" style="left:1225.14px;top:287.00px;font-size:14.4px;font-weight:400;color:#6c6e79;letter-spacing:0.777px;">0/250</span>
<span class="t" id="t53" style="left:1331.26px;top:287.00px;font-size:14.4px;font-weight:400;color:#6c6e79;letter-spacing:-0.505px;">7/10</span>
<span class="t" id="t54" style="left:1416.89px;top:286.00px;font-size:16px;font-weight:400;color:#6c6e79;letter-spacing:0.636px;-webkit-text-stroke:0.25px #6c6e79;">Export</span>
<span class="t" id="t55" style="left:307.09px;top:334.00px;font-size:13.5px;font-weight:400;color:#191b23;letter-spacing:0.541px;">Keyword</span>
<span class="t" id="t56" style="left:757.95px;top:334.00px;font-size:13.5px;font-weight:400;color:#191b23;letter-spacing:0.313px;">Intent</span>
<span class="t" id="t57" style="left:860.44px;top:334.00px;font-size:13.5px;font-weight:400;color:#191b23;letter-spacing:0.126px;">Volume</span>
<span class="t" id="t58" style="left:980.09px;top:334.00px;font-size:13.5px;font-weight:400;color:#191b23;letter-spacing:0.458px;">KD %</span>
<span class="t" id="t59" style="left:1040.51px;top:334.00px;font-size:13.5px;font-weight:400;color:#191b23;letter-spacing:-0.028px;">CPC (USD)</span>
<span class="t" id="t60" style="left:1174.39px;top:334.00px;font-size:13.5px;font-weight:400;color:#191b23;letter-spacing:-0.154px;">SERP Features</span>
<span class="t" id="t61" style="left:1421.96px;top:334.00px;font-size:13.5px;font-weight:400;color:#191b23;letter-spacing:0.644px;">Updated</span>
<span class="t" id="t62" style="left:329.69px;top:381.00px;font-size:16px;font-weight:400;color:#0b66bd;letter-spacing:0.196px;">haardhout</span>
<span class="t" id="t63" style="left:760.03px;top:383.00px;font-size:13.2px;font-weight:400;color:#a75800;letter-spacing:0.000px;-webkit-text-stroke:0.2px #a75800;">C</span>
<span class="t" id="t64" style="left:890.00px;top:381.00px;font-size:16px;font-weight:400;color:#191b23;letter-spacing:-0.482px;">8,100</span>
<span class="t" id="t65" style="left:976.06px;top:381.00px;font-size:16px;font-weight:400;color:#191b23;letter-spacing:0.648px;">52</span>
<span class="t" id="t66" style="left:1078.58px;top:381.00px;font-size:16px;font-weight:400;color:#191b23;letter-spacing:0.096px;">0.97</span>
<span class="t" id="t67" style="left:1269.82px;top:381.00px;font-size:16px;font-weight:400;color:#6c6e79;letter-spacing:0.703px;">+5</span>
<span class="t" id="t68" style="left:1392.99px;top:381.00px;font-size:16px;font-weight:400;color:#191b23;letter-spacing:0.364px;">3 weeks</span>
<span class="t" id="t69" style="left:330.13px;top:429.00px;font-size:16px;font-weight:400;color:#0b66bd;letter-spacing:0.236px;">openhaard</span>
<span class="t" id="t70" style="left:763.18px;top:431.00px;font-size:13.2px;font-weight:400;color:#006dca;letter-spacing:0.000px;-webkit-text-stroke:0.2px #006dca;">I</span>
<span class="t" id="t71" style="left:783.90px;top:431.00px;font-size:13.2px;font-weight:400;color:#007c65;letter-spacing:0.000px;-webkit-text-stroke:0.2px #007c65;">T</span>
<span class="t" id="t72" style="left:885.56px;top:429.00px;font-size:16px;font-weight:400;color:#191b23;letter-spacing:0.630px;">5,400</span>
<span class="t" id="t73" style="left:975.09px;top:429.00px;font-size:16px;font-weight:400;color:#191b23;letter-spacing:1.281px;">34</span>
<span class="t" id="t74" style="left:1080.48px;top:429.00px;font-size:16px;font-weight:400;color:#191b23;letter-spacing:-0.539px;">1.27</span>
<span class="t" id="t75" style="left:1269.82px;top:429.00px;font-size:16px;font-weight:400;color:#6c6e79;letter-spacing:0.836px;">+2</span>
<span class="t" id="t76" style="left:1396.38px;top:429.00px;font-size:16px;font-weight:400;color:#191b23;letter-spacing:0.024px;">1 month</span>
<span class="t" id="t77" style="left:329.69px;top:478.00px;font-size:16px;font-weight:400;color:#0b66bd;letter-spacing:0.267px;">haardhout kopen</span>
<span class="t" id="t78" style="left:761.80px;top:480.00px;font-size:13.2px;font-weight:400;color:#007c65;letter-spacing:0.000px;-webkit-text-stroke:0.2px #007c65;">T</span>
<span class="t" id="t79" style="left:885.40px;top:478.00px;font-size:16px;font-weight:400;color:#191b23;letter-spacing:0.671px;">2,900</span>
<span class="t" id="t80" style="left:975.23px;top:478.00px;font-size:16px;font-weight:400;color:#191b23;letter-spacing:1.300px;">50</span>
<span class="t" id="t81" style="left:1077.88px;top:478.00px;font-size:16px;font-weight:400;color:#191b23;letter-spacing:0.293px;">0.88</span>
<span class="t" id="t82" style="left:1396.38px;top:478.00px;font-size:16px;font-weight:400;color:#191b23;letter-spacing:0.024px;">1 month</span>
<span class="t" id="t83" style="left:330.13px;top:526.00px;font-size:16px;font-weight:400;color:#0b66bd;letter-spacing:0.245px;">openhaardhout kopen</span>
<span class="t" id="t84" style="left:761.80px;top:528.00px;font-size:13.2px;font-weight:400;color:#007c65;letter-spacing:0.000px;-webkit-text-stroke:0.2px #007c65;">T</span>
<span class="t" id="t85" style="left:885.40px;top:526.00px;font-size:16px;font-weight:400;color:#191b23;letter-spacing:0.671px;">2,900</span>
<span class="t" id="t86" style="left:975.31px;top:526.00px;font-size:16px;font-weight:400;color:#191b23;letter-spacing:1.300px;">53</span>
<span class="t" id="t87" style="left:1077.88px;top:526.00px;font-size:16px;font-weight:400;color:#191b23;letter-spacing:0.296px;">0.83</span>
<span class="t" id="t88" style="left:1269.82px;top:526.00px;font-size:16px;font-weight:400;color:#6c6e79;letter-spacing:0.734px;">+3</span>
<span class="t" id="t89" style="left:1379.19px;top:526.00px;font-size:16px;font-weight:400;color:#191b23;letter-spacing:0.255px;">Last week</span>
<span class="t" id="t90" style="left:330.13px;top:575.00px;font-size:16px;font-weight:400;color:#0b66bd;letter-spacing:0.211px;">openhaardhout</span>
<span class="t" id="t91" style="left:760.03px;top:577.00px;font-size:13.2px;font-weight:400;color:#a75800;letter-spacing:0.000px;-webkit-text-stroke:0.2px #a75800;">C</span>
<span class="t" id="t92" style="left:885.40px;top:575.00px;font-size:16px;font-weight:400;color:#191b23;letter-spacing:0.671px;">2,400</span>
<span class="t" id="t93" style="left:975.23px;top:575.00px;font-size:16px;font-weight:400;color:#191b23;letter-spacing:1.300px;">20</span>
<span class="t" id="t94" style="left:1077.88px;top:575.00px;font-size:16px;font-weight:400;color:#191b23;letter-spacing:0.293px;">0.98</span>
<span class="t" id="t95" style="left:1269.82px;top:575.00px;font-size:16px;font-weight:400;color:#6c6e79;letter-spacing:0.500px;">+4</span>
<span class="t" id="t96" style="left:1392.20px;top:575.00px;font-size:16px;font-weight:400;color:#191b23;letter-spacing:0.497px;">2 weeks</span>
</body></html>
